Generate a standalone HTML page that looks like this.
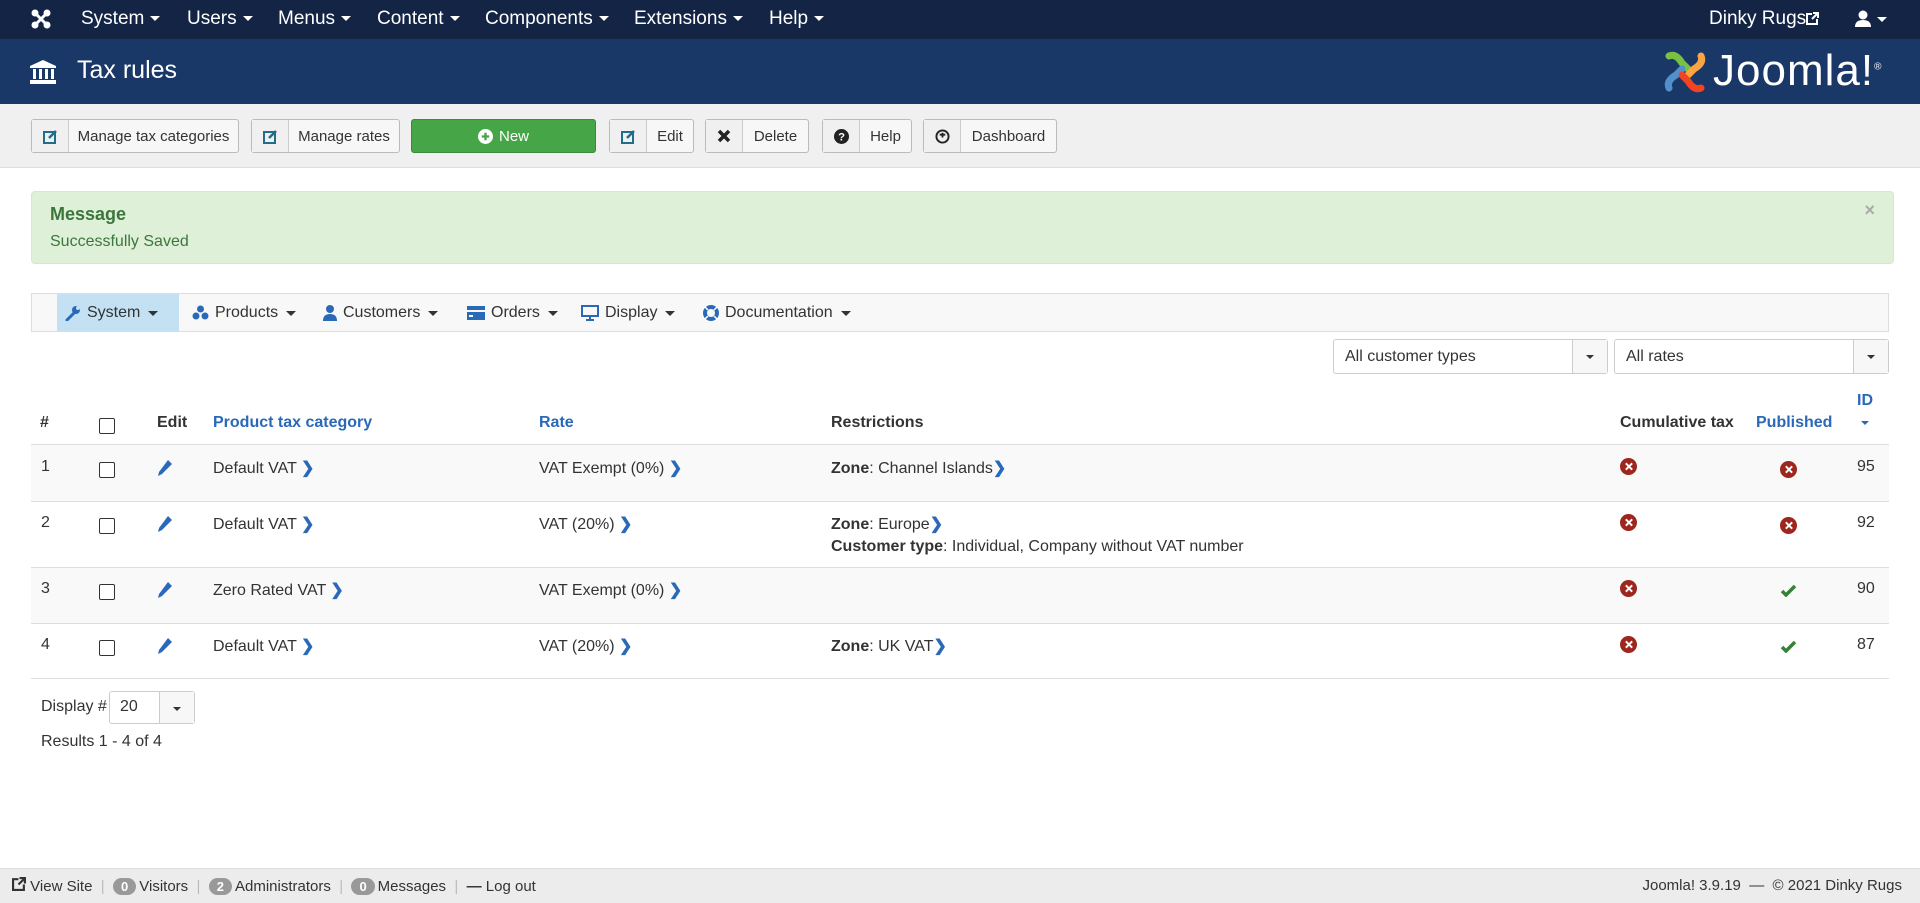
<!DOCTYPE html>
<html><head><meta charset="utf-8"><style>
*{box-sizing:border-box;margin:0;padding:0}
body{width:1920px;height:903px;overflow:hidden;font-family:"Liberation Sans",Arial,sans-serif;font-size:16px;color:#333;background:#fff;position:relative}
.abs{position:absolute}
.nav{left:0;top:0;width:1920px;height:39px;background:#132445;color:#fff;font-size:19px}
.nav span{position:absolute;top:8px}
.car{display:inline-block;width:0;height:0;border-left:5px solid transparent;border-right:5px solid transparent;border-top:5px solid currentColor;vertical-align:middle;margin-left:6px}
.hdr{left:0;top:39px;width:1920px;height:65px;background:#1a3867;color:#fff}
.tb{left:0;top:104px;width:1920px;height:64px;background:#f0f0f0;border-bottom:1px solid #ddd}
.btn{position:absolute;top:119px;height:34px;background:#f7f7f7;border:1px solid #bbb;border-radius:3px;font-size:15px;display:flex;align-items:center;color:#333}
.btn .ic{width:37px;height:100%;border-right:1px solid #ccc;display:flex;align-items:center;justify-content:center;background:#f0f0f0}
.btn .t{flex:1;text-align:center}
.msg{left:31px;top:191px;width:1863px;height:73px;background:#dff0d8;border:1px solid #d6e9c6;border-radius:4px;color:#3c763d}
.sub{left:31px;top:293px;width:1858px;height:39px;background:#f8f8f8;border:1px solid #ddd}
.sub span{position:absolute;top:10px;font-size:16px;color:#333;display:flex;align-items:center;gap:6px}
.sub span .car{margin-left:2px}
.sel{position:absolute;height:35px;border:1px solid #ccc;border-radius:3px;background:#fff;font-size:16px;padding:8px 11px}
.sel b{position:absolute;right:0;top:0;width:35px;height:100%;border-left:1px solid #ccc;background:#f7f7f7}
.sel b:after{content:"";position:absolute;left:13px;top:15px;border-left:4px solid transparent;border-right:4px solid transparent;border-top:4px solid #333}
.th{position:absolute;top:414px;font-weight:bold;font-size:16px}
.lnk{color:#2a69b8}
.row{position:absolute;left:31px;width:1858px;border-top:1px solid #ddd}
.c{position:absolute;font-size:16px}
.cb{position:absolute;width:16px;height:16px;border:1px solid #333;background:#fff;border-radius:2px}
.chev{color:#2a69b8;font-weight:bold}
.foot{left:0;top:868px;width:1920px;height:35px;background:#ececec;border-top:1px solid #ddd;font-size:15px;color:#333}
.badge{display:inline-block;background:#999;color:#fff;border-radius:10px;padding:1px 8px;font-weight:bold;font-size:13px;margin-right:3px}
.x{position:absolute;width:17px;height:17px;border-radius:50%;background:#9d261d}
.x:before,.x:after{content:"";position:absolute;left:8px;top:4px;width:2px;height:9px;background:#fff;transform:rotate(45deg)}
.x:after{transform:rotate(-45deg)}
.pen{position:absolute}
</style></head><body>
<div class="abs nav">
<svg class="abs" style="left:31px;top:9px" width="20" height="20" viewBox="0 0 20 20"><g fill="none" stroke="#fff" stroke-width="3"><path d="M4 4L16 16M16 4L4 16"/><circle cx="4" cy="4" r="2" fill="#fff"/><circle cx="16" cy="4" r="2" fill="#fff"/><circle cx="4" cy="16" r="2" fill="#fff"/><circle cx="16" cy="16" r="2" fill="#fff"/></g></svg>
<span style="left:81px">System<i class="car"></i></span>
<span style="left:187px">Users<i class="car"></i></span>
<span style="left:278px">Menus<i class="car"></i></span>
<span style="left:377px">Content<i class="car"></i></span>
<span style="left:485px">Components<i class="car"></i></span>
<span style="left:634px">Extensions<i class="car"></i></span>
<span style="left:769px">Help<i class="car"></i></span>
<span style="left:1709px">Dinky Rugs</span>
<svg class="abs" style="left:1806px;top:12px" width="13" height="13" viewBox="0 0 13 13" fill="none" stroke="#fff" stroke-width="2"><path d="M6 2H1V12H11V7"/><path d="M7 1H12V6M12 1L6 7"/></svg>
<svg class="abs" style="left:1855px;top:10px" width="16" height="17" viewBox="0 0 16 17" fill="#fff"><circle cx="8" cy="5" r="4.5"/><path d="M0 17Q0 10 8 10Q16 10 16 17Z"/></svg>
<i class="car abs" style="left:1871px;top:17px;color:#fff"></i>
</div>
<div class="abs hdr">
<svg class="abs" style="left:30px;top:21px" width="26" height="24" viewBox="0 0 26 24" fill="#fff"><path d="M13 0L26 6V8H0V6Z"/><rect x="3" y="9" width="3" height="10"/><rect x="9" y="9" width="3" height="10"/><rect x="15" y="9" width="3" height="10"/><rect x="21" y="9" width="3" height="10"/><rect x="0" y="20" width="26" height="4"/></svg>
<div class="abs" style="left:77px;top:17px;font-size:25px">Tax rules</div>
<svg class="abs" style="left:1662px;top:10px" width="46" height="46" viewBox="0 0 46 46"><g stroke-width="7" stroke-linecap="round" fill="none"><path d="M7 7Q14 4 20 14L26 20" stroke="#7ac143"/><path d="M39 7Q42 14 32 20L26 26" stroke="#f9a541"/><path d="M7 39Q4 32 14 26L20 20" stroke="#5091cd"/><path d="M39 39Q32 42 26 32L20 26" stroke="#f44321"/></g></svg>
<div class="abs" style="left:1713px;top:7px;font-size:44px;color:#fff;letter-spacing:1px;font-weight:300">Joomla!<sup style="font-size:10px">®</sup></div>
</div>
<div class="abs tb"></div>
<div class="btn" style="left:31px;width:208px"><div class="ic"><svg width="15" height="15" viewBox="0 0 15 15"><rect x="1" y="3" width="11" height="11" fill="none" stroke="#1f6f8b" stroke-width="2"/><path d="M6 9L13 2" stroke="#1f6f8b" stroke-width="2.5"/></svg></div><div class="t">Manage tax categories</div></div>
<div class="btn" style="left:251px;width:149px"><div class="ic"><svg width="15" height="15" viewBox="0 0 15 15"><rect x="1" y="3" width="11" height="11" fill="none" stroke="#1f6f8b" stroke-width="2"/><path d="M6 9L13 2" stroke="#1f6f8b" stroke-width="2.5"/></svg></div><div class="t">Manage rates</div></div>
<div class="btn" style="left:411px;width:185px;background:#46a546;border-color:#3b8a3b;color:#fff;justify-content:center"><svg width="15" height="15" viewBox="0 0 16 16" style="margin-right:6px"><circle cx="8" cy="8" r="8" fill="#fff"/><path d="M8 4V12M4 8H12" stroke="#46a546" stroke-width="2.5"/></svg>New</div>
<div class="btn" style="left:609px;width:85px"><div class="ic"><svg width="15" height="15" viewBox="0 0 15 15"><rect x="1" y="3" width="11" height="11" fill="none" stroke="#1f6f8b" stroke-width="2"/><path d="M6 9L13 2" stroke="#1f6f8b" stroke-width="2.5"/></svg></div><div class="t">Edit</div></div>
<div class="btn" style="left:705px;width:104px"><div class="ic"><svg width="14" height="14" viewBox="0 0 14 14"><path d="M2 2L12 12M12 2L2 12" stroke="#222" stroke-width="3.5"/></svg></div><div class="t">Delete</div></div>
<div class="btn" style="left:822px;width:90px"><div class="ic"><svg width="15" height="15" viewBox="0 0 16 16"><circle cx="8" cy="8" r="8" fill="#222"/><text x="8" y="12.5" font-size="12" font-weight="bold" text-anchor="middle" fill="#fff" font-family="Liberation Sans">?</text></svg></div><div class="t">Help</div></div>
<div class="btn" style="left:923px;width:134px"><div class="ic"><svg width="15" height="15" viewBox="0 0 16 16"><circle cx="8" cy="8" r="6.5" fill="none" stroke="#222" stroke-width="2"/><path d="M8 4V9M5 6H11" stroke="#222" stroke-width="2"/></svg></div><div class="t">Dashboard</div></div>
<div class="abs msg"><div class="abs" style="left:18px;top:12px;font-weight:bold;font-size:18px">Message</div><div class="abs" style="left:18px;top:41px;font-size:16px">Successfully Saved</div><div class="abs" style="right:18px;top:8px;color:#aaa;font-size:18px;font-weight:bold">×</div></div>
<div class="abs sub">
<div class="abs" style="left:25px;top:0;width:122px;height:37px;background:#c3e1f3"></div>
<span style="left:33px"><svg width="16" height="16" viewBox="0 0 16 16"><path d="M2 15L9 8" stroke="#2a69b8" stroke-width="3" stroke-linecap="round"/><circle cx="11" cy="5" r="4" fill="#2a69b8"/><circle cx="13" cy="3" r="2" fill="#c3e1f3"/></svg>System<i class="car"></i></span>
<span style="left:160px"><svg width="17" height="16" viewBox="0 0 17 16" fill="#2a69b8"><circle cx="8.5" cy="4" r="3.5"/><circle cx="4" cy="11" r="3.5"/><circle cx="13" cy="11" r="3.5"/></svg>Products<i class="car"></i></span>
<span style="left:291px"><svg width="14" height="16" viewBox="0 0 14 16" fill="#2a69b8"><circle cx="7" cy="4" r="4"/><path d="M0 16Q0 9 7 9Q14 9 14 16Z"/></svg>Customers<i class="car"></i></span>
<span style="left:435px"><svg width="18" height="14" viewBox="0 0 18 14" fill="#2a69b8"><rect x="0" y="0" width="18" height="4"/><rect x="0" y="6" width="18" height="8"/><rect x="2" y="9" width="4" height="2" fill="#f8f8f8"/></svg>Orders<i class="car"></i></span>
<span style="left:549px"><svg width="18" height="16" viewBox="0 0 18 16"><rect x="1" y="1" width="16" height="10" fill="none" stroke="#2a69b8" stroke-width="2"/><path d="M9 11V15M5 15H13" stroke="#2a69b8" stroke-width="2"/></svg>Display<i class="car"></i></span>
<span style="left:671px"><svg width="16" height="16" viewBox="0 0 16 16"><circle cx="8" cy="8" r="6" fill="none" stroke="#2a69b8" stroke-width="4"/><path d="M2 2L5 5M14 2L11 5M2 14L5 11M14 14L11 11" stroke="#fff" stroke-width="1.5"/></svg>Documentation<i class="car"></i></span>
</div>
<div class="sel" style="left:1333px;top:339px;width:275px">All customer types<b></b></div>
<div class="sel" style="left:1614px;top:339px;width:275px">All rates<b></b></div>
<div class="th" style="left:40px">#</div>
<div class="cb" style="left:99px;top:418px"></div>
<div class="th" style="left:157px">Edit</div>
<div class="th lnk" style="left:213px">Product tax category</div>
<div class="th lnk" style="left:539px">Rate</div>
<div class="th" style="left:831px">Restrictions</div>
<div class="th" style="left:1620px">Cumulative tax</div>
<div class="th lnk" style="left:1756px">Published</div>
<div class="th lnk" style="left:1857px;top:392px">ID</div>
<div class="abs" style="left:1861px;top:421px;border-left:4px solid transparent;border-right:4px solid transparent;border-top:4px solid #2a69b8"></div>

<div class="row" style="top:444px;height:57px;background:#f9f9f9"></div>
<div class="row" style="top:501px;height:66px"></div>
<div class="row" style="top:567px;height:56px;background:#f9f9f9"></div>
<div class="row" style="top:623px;height:56px;border-bottom:1px solid #ddd"></div>

<svg style="display:none"><symbol id="p" viewBox="0 0 16 18"><path d="M11 1L15 5L5 15L1 17L2 13Z" fill="#2a69b8"/></symbol></svg>

<div class="c" style="left:41px;top:458px">1</div><div class="cb" style="left:99px;top:462px"></div><svg class="pen" style="left:157px;top:459px" width="16" height="18"><use href="#p"/></svg>
<div class="c" style="left:213px;top:458px">Default VAT <span class="chev">&#x276F;</span></div>
<div class="c" style="left:539px;top:458px">VAT Exempt (0%) <span class="chev">&#x276F;</span></div>
<div class="c" style="left:831px;top:458px"><b>Zone</b>: Channel Islands<span class="chev">&#x276F;</span></div>
<div class="x" style="left:1620px;top:458px"></div><div class="x" style="left:1780px;top:461px"></div><div class="c" style="left:1857px;top:458px">95</div>

<div class="c" style="left:41px;top:514px">2</div><div class="cb" style="left:99px;top:518px"></div><svg class="pen" style="left:157px;top:515px" width="16" height="18"><use href="#p"/></svg>
<div class="c" style="left:213px;top:514px">Default VAT <span class="chev">&#x276F;</span></div>
<div class="c" style="left:539px;top:514px">VAT (20%) <span class="chev">&#x276F;</span></div>
<div class="c" style="left:831px;top:514px;line-height:22px"><b>Zone</b>: Europe<span class="chev">&#x276F;</span><br><b>Customer type</b>: Individual, Company without VAT number</div>
<div class="x" style="left:1620px;top:514px"></div><div class="x" style="left:1780px;top:517px"></div><div class="c" style="left:1857px;top:514px">92</div>

<div class="c" style="left:41px;top:580px">3</div><div class="cb" style="left:99px;top:584px"></div><svg class="pen" style="left:157px;top:581px" width="16" height="18"><use href="#p"/></svg>
<div class="c" style="left:213px;top:580px">Zero Rated VAT <span class="chev">&#x276F;</span></div>
<div class="c" style="left:539px;top:580px">VAT Exempt (0%) <span class="chev">&#x276F;</span></div>
<div class="x" style="left:1620px;top:580px"></div><svg class="pen" style="left:1780px;top:584px" width="17" height="13" viewBox="0 0 17 13"><path d="M2 7L6 11L15 2" fill="none" stroke="#378137" stroke-width="3.5"/></svg><div class="c" style="left:1857px;top:580px">90</div>

<div class="c" style="left:41px;top:636px">4</div><div class="cb" style="left:99px;top:640px"></div><svg class="pen" style="left:157px;top:637px" width="16" height="18"><use href="#p"/></svg>
<div class="c" style="left:213px;top:636px">Default VAT <span class="chev">&#x276F;</span></div>
<div class="c" style="left:539px;top:636px">VAT (20%) <span class="chev">&#x276F;</span></div>
<div class="c" style="left:831px;top:636px"><b>Zone</b>: UK VAT<span class="chev">&#x276F;</span></div>
<div class="x" style="left:1620px;top:636px"></div><svg class="pen" style="left:1780px;top:640px" width="17" height="13" viewBox="0 0 17 13"><path d="M2 7L6 11L15 2" fill="none" stroke="#378137" stroke-width="3.5"/></svg><div class="c" style="left:1857px;top:636px">87</div>

<div class="c" style="left:41px;top:698px">Display #</div>
<div class="sel" style="left:109px;top:691px;width:86px;height:33px;padding:6px 10px">20<b></b></div>
<div class="c" style="left:41px;top:733px">Results 1 - 4 of 4</div>

<div class="abs foot">
<div class="abs" style="left:12px;top:8px;white-space:nowrap"><svg width="14" height="14" viewBox="0 0 13 13" fill="none" stroke="#333" stroke-width="2"><path d="M6 2H1V12H11V7"/><path d="M7 1H12V6M12 1L6 7"/></svg> View Site &nbsp;<span style="color:#bbb">|</span>&nbsp; <span class="badge">0</span>Visitors &nbsp;<span style="color:#bbb">|</span>&nbsp; <span class="badge">2</span>Administrators &nbsp;<span style="color:#bbb">|</span>&nbsp; <span class="badge">0</span>Messages &nbsp;<span style="color:#bbb">|</span>&nbsp; <b>&#8212;</b> Log out</div>
<div class="abs" style="right:18px;top:8px">Joomla! 3.9.19 &nbsp;— &nbsp;© 2021 Dinky Rugs</div>
</div>
</body></html>
